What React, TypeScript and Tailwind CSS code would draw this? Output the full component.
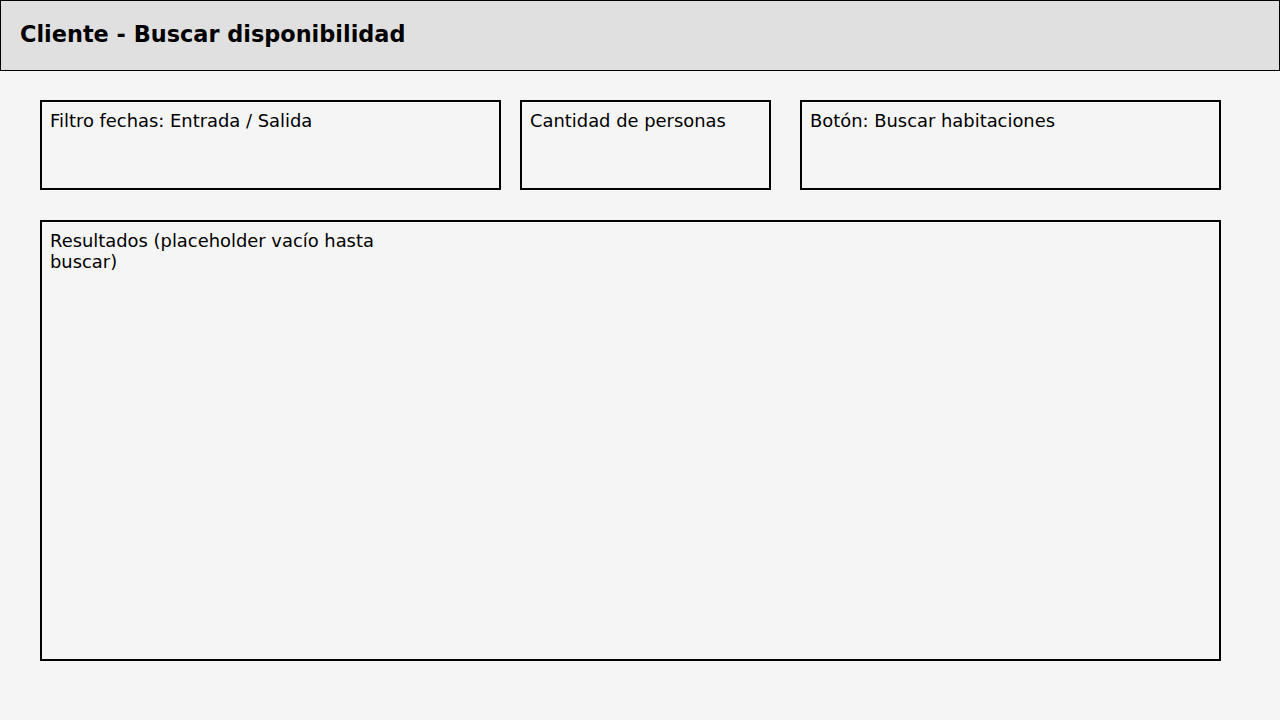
export default function App() {
  return (
    <div className="min-h-screen w-full bg-[#f5f5f5] text-black font-['DejaVu_Sans',sans-serif]">
      {/* Header */}
      <div className="h-[71px] border border-black bg-[#e0e0e0] px-[19px] pt-[18px]">
        <h1 className="text-[22.4px] font-bold leading-[30px]">Cliente - Buscar disponibilidad</h1>
      </div>

      <div className="px-10 pt-[29px]">
        {/* Filters row */}
        <div className="flex">
          <div className="w-[461px] h-[90px] border-2 border-black px-2 pt-2">
            <p className="text-[17.9px] leading-[21px]">Filtro fechas: Entrada / Salida</p>
          </div>
          <div className="ml-[19px] w-[251px] h-[90px] border-2 border-black px-2 pt-2">
            <p className="text-[17.9px] leading-[21px]">Cantidad de personas</p>
          </div>
          <div className="ml-[29px] w-[421px] h-[90px] border-2 border-black px-2 pt-2">
            <p className="text-[17.9px] leading-[21px]">Botón: Buscar habitaciones</p>
          </div>
        </div>

        {/* Results */}
        <div className="mt-[30px] w-[1181px] h-[441px] border-2 border-black px-2 pt-2">
          <p className="max-w-[360px] text-[17.9px] leading-[21px]">Resultados (placeholder vacío hasta buscar)</p>
        </div>
      </div>
    </div>
  );
}
